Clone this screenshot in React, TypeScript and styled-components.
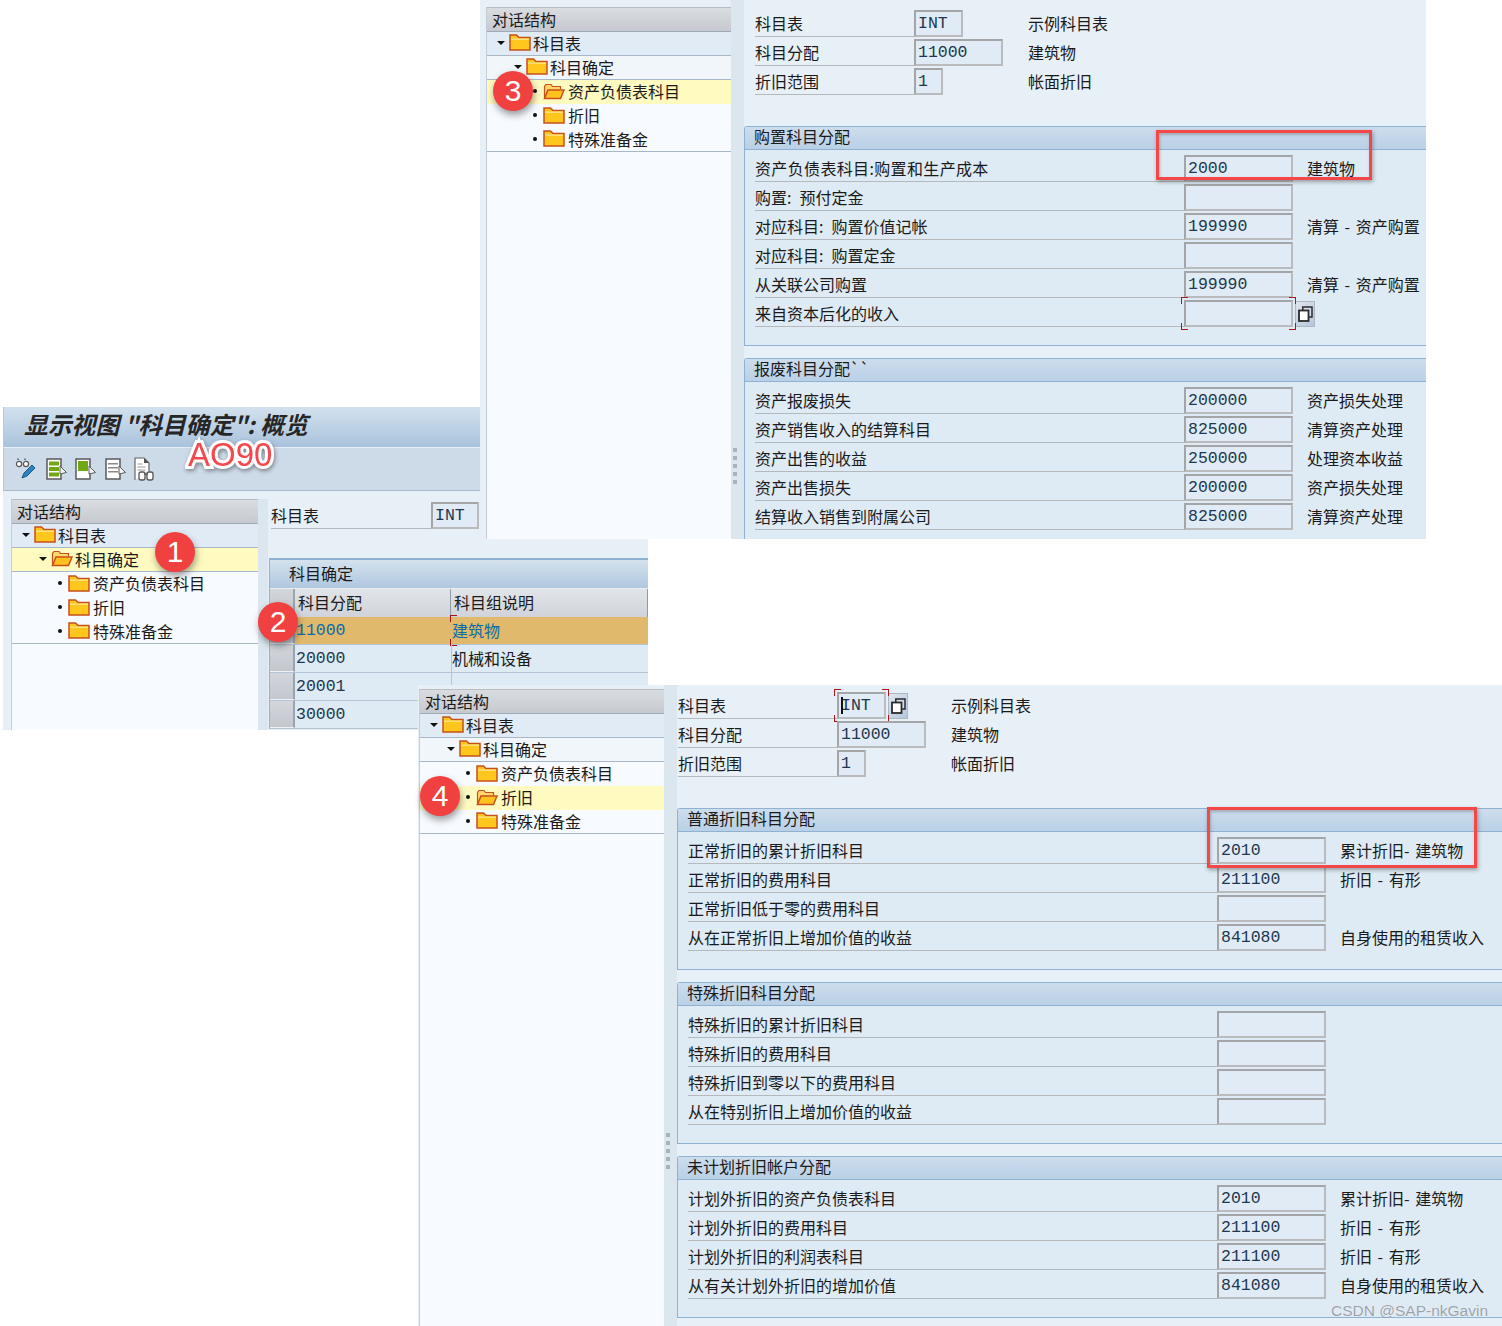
import styled, { createGlobalStyle } from "styled-components";

type TreeItem = { label: string; level: number; selected?: boolean };
type RowData = { label: string; value?: string; text?: string; focus?: boolean; f4?: boolean; caret?: boolean; spread?: boolean };

const treeItems = ["科目表", "科目确定", "资产负债表科目", "折旧", "特殊准备金"];
const levels = [0, 1, 2, 2, 2];

const buildTree = (selected: number): TreeItem[] =>
  treeItems.map((label, i) => ({ label, level: levels[i], selected: i === selected }));

const purchaseRows: RowData[] = [
  { label: "资产负债表科目:购置和生产成本", value: "2000", text: "建筑物", spread: true },
  { label: "购置: 预付定金" },
  { label: "对应科目: 购置价值记帐", value: "199990", text: "清算 - 资产购置" },
  { label: "对应科目: 购置定金" },
  { label: "从关联公司购置", value: "199990", text: "清算 - 资产购置" },
  { label: "来自资本后化的收入", focus: true, f4: true },
];

const scrapRows: RowData[] = [
  { label: "资产报废损失", value: "200000", text: "资产损失处理" },
  { label: "资产销售收入的结算科目", value: "825000", text: "清算资产处理" },
  { label: "资产出售的收益", value: "250000", text: "处理资本收益" },
  { label: "资产出售损失", value: "200000", text: "资产损失处理" },
  { label: "结算收入销售到附属公司", value: "825000", text: "清算资产处理" },
];

const normalRows: RowData[] = [
  { label: "正常折旧的累计折旧科目", value: "2010", text: "累计折旧- 建筑物" },
  { label: "正常折旧的费用科目", value: "211100", text: "折旧 - 有形" },
  { label: "正常折旧低于零的费用科目" },
  { label: "从在正常折旧上增加价值的收益", value: "841080", text: "自身使用的租赁收入" },
];

const specialRows: RowData[] = [
  { label: "特殊折旧的累计折旧科目" },
  { label: "特殊折旧的费用科目" },
  { label: "特殊折旧到零以下的费用科目" },
  { label: "从在特别折旧上增加价值的收益" },
];

const unplannedRows: RowData[] = [
  { label: "计划外折旧的资产负债表科目", value: "2010", text: "累计折旧- 建筑物" },
  { label: "计划外折旧的费用科目", value: "211100", text: "折旧 - 有形" },
  { label: "计划外折旧的利润表科目", value: "211100", text: "折旧 - 有形" },
  { label: "从有关计划外折旧的增加价值", value: "841080", text: "自身使用的租赁收入" },
];

const tableRows = [
  { code: "11000", text: "建筑物", active: true },
  { code: "20000", text: "机械和设备" },
  { code: "20001", text: "" },
  { code: "30000", text: "" },
];

const FolderIcon = ({ open }: { open?: boolean }) =>
  open ? (
    <svg width="22" height="17" viewBox="0 0 22 17">
      <path d="M1.5 15.5V3.5L3 1.5h5l1.5 2h8v3" fill="#ffd76a" stroke="#c8501c" strokeWidth="1.2" />
      <path d="M1.5 15.5L5 7h16l-3.5 8.5z" fill="#ffc21f" stroke="#c8501c" strokeWidth="1.5" />
    </svg>
  ) : (
    <svg width="22" height="17" viewBox="0 0 22 17">
      <path d="M1 16V1h6.5L10 3.5h11V16z" fill="#ffc71e" stroke="#c8501c" strokeWidth="1.5" />
      <path d="M2 4.5h18V6H2z" fill="#ffe07a" />
    </svg>
  );

const GlassesPencilIcon = () => (
  <svg width="22" height="24" viewBox="0 0 22 24">
    <circle cx="4" cy="7" r="2.6" fill="#fff" stroke="#555" strokeWidth="1.2" />
    <circle cx="11" cy="7" r="2.6" fill="#fff" stroke="#555" strokeWidth="1.2" />
    <path d="M3 3V1.5M10 3V1.5" stroke="#555" strokeWidth="1.4" />
    <path d="M7 21l2-5L17 8l3 3-8 8z" fill="#2e82bd" stroke="#1c5a8a" strokeWidth="1" />
  </svg>
);

const DocArrowIcon = ({ fill, full }: { fill: string; full?: boolean }) => (
  <svg width="21" height="22" viewBox="0 0 21 22">
    <path d="M1 1h14v20H1z" fill="#fff" stroke="#5a5a5a" strokeWidth="1.5" />
    {full ? (
      <path d="M3 3.5h10v4H3zM3 9h10v4H3zM3 14.5h10v4H3z" fill={fill} />
    ) : fill === "#6fa810" ? (
      <path d="M3 3h10v10H3z" fill={fill} />
    ) : (
      <path d="M3 5h10v1.6H3zM3 9h10v1.6H3zM3 13h10v1.6H3z" fill={fill} />
    )}
    <path d="M14 8l6.5 6.5L14 16z" fill="#f3f3f3" stroke="#5a5a5a" strokeWidth="1" />
  </svg>
);

const DocGlassesIcon = () => (
  <svg width="21" height="24" viewBox="0 0 21 24">
    <path d="M1 23V1h9l5 5v8" fill="#fff" stroke="#666" strokeWidth="1.2" />
    <path d="M10 1l5 5h-5z" fill="#555" />
    <path d="M3.5 7h5M3.5 10h8M3.5 13h8" stroke="#999" />
    <rect x="5" y="15" width="6" height="8" rx="2" fill="#fff" stroke="#555" strokeWidth="1.3" />
    <rect x="13" y="15" width="6" height="8" rx="2" fill="#fff" stroke="#555" strokeWidth="1.3" />
    <path d="M10 17h4" stroke="#555" strokeWidth="1.3" />
  </svg>
);

const CopyIcon = () => (
  <svg width="15" height="16" viewBox="0 0 15 16">
    <rect x="4.8" y="1" width="9.2" height="10" fill="#cfdcec" stroke="#2b2b2b" strokeWidth="1.5" />
    <rect x="1" y="4.5" width="9.5" height="10.5" fill="#fff" stroke="#2b2b2b" strokeWidth="1.8" />
  </svg>
);

const Tree = ({ selected, width }: { selected: number; width: number }) => (
  <TreePanel $width={width}>
    <TreeHeader>对话结构</TreeHeader>
    {buildTree(selected).map((item) => (
      <TreeRow key={item.label} $level={item.level} $selected={item.selected}>
        <Marker>{item.level < 2 ? <Arrow /> : <Bullet />}</Marker>
        <FolderIcon open={item.selected} />
        <TreeLabel $leaf={item.level === 2}>{item.label}</TreeLabel>
      </TreeRow>
    ))}
  </TreePanel>
);

const Grip = ({ width = 13 }: { width?: number }) => (
  <Splitter $width={width}>
    <GripDots>
      {[0, 1, 2, 3, 4].map((i) => (
        <GripDot key={i} />
      ))}
    </GripDots>
  </Splitter>
);

const Row = ({ row, labelWidth, fieldCol, fieldWidth = 109 }: { row: RowData; labelWidth: number; fieldCol: number; fieldWidth?: number }) => (
  <FieldRow $label={labelWidth} $field={fieldCol}>
    <FieldLabel $spread={row.spread}>{row.label}</FieldLabel>
    <FieldCell>
      <Field $width={fieldWidth} $focus={row.focus} $caret={row.caret}>
        {row.value}
      </Field>
      {row.f4 && (
        <F4Button>
          <CopyIcon />
        </F4Button>
      )}
    </FieldCell>
    <FieldText>{row.text}</FieldText>
  </FieldRow>
);

const Group = ({ title, rows, labelWidth }: { title: string; rows: RowData[]; labelWidth: number }) => (
  <Panel>
    <PanelTitle>{title}</PanelTitle>
    <PanelBody>
      {rows.map((row) => (
        <Row key={row.label} row={row} labelWidth={labelWidth} fieldCol={123} />
      ))}
    </PanelBody>
  </Panel>
);

const HeadFields = ({ inset, chartCaret }: { inset: number; chartCaret?: boolean }) => (
  <HeadBlock $inset={inset}>
    <Row row={{ label: "科目表", value: "INT", text: "示例科目表", focus: chartCaret, caret: chartCaret, f4: chartCaret }} labelWidth={159} fieldCol={114} fieldWidth={49} />
    <Row row={{ label: "科目分配", value: "11000", text: "建筑物" }} labelWidth={159} fieldCol={114} fieldWidth={89} />
    <Row row={{ label: "折旧范围", value: "1", text: "帐面折旧" }} labelWidth={159} fieldCol={114} fieldWidth={29} />
  </HeadBlock>
);

export default function App() {
  return (
    <>
      <GlobalStyle />
      <Canvas>
        <Window $x={3} $y={407} $w={645} $h={323} $z={1}>
          <TitleBar>显示视图 "科目确定": 概览</TitleBar>
          <Toolbar>
            <GlassesPencilIcon />
            <DocArrowIcon fill="#6fa810" full />
            <DocArrowIcon fill="#6fa810" />
            <DocArrowIcon fill="#8a8a8a" />
            <DocGlassesIcon />
          </Toolbar>
          <OverviewBody>
            <Tree selected={1} width={247} />
            <Grip width={10} />
            <OverviewMain>
              <ChartRow>
                <FieldRow $label={160} $field={60}>
                  <FieldLabel>科目表</FieldLabel>
                  <FieldCell>
                    <Field $width={48}>INT</Field>
                  </FieldCell>
                </FieldRow>
              </ChartRow>
              <TablePanel>
                <TableTitle>科目确定</TableTitle>
                <HeaderRow>
                  <Selector />
                  <HeaderCell>科目分配</HeaderCell>
                  <HeaderCell>科目组说明</HeaderCell>
                </HeaderRow>
                {tableRows.map((row) => (
                  <TableRow key={row.code} $active={row.active}>
                    <Selector />
                    <CodeCell $active={row.active}>{row.code}</CodeCell>
                    <TextCell $active={row.active}>{row.text}</TextCell>
                  </TableRow>
                ))}
              </TablePanel>
            </OverviewMain>
          </OverviewBody>
        </Window>

        <Window $x={480} $y={0} $w={946} $h={539} $z={2}>
          <DetailLayout $pad={6} $treeTop={7}>
            <Tree selected={2} width={245} />
            <Grip />
            <DetailMain $top={10}>
              <HeadFields inset={11} />
              <Group title="购置科目分配" rows={purchaseRows} labelWidth={429} />
              <Group title="报废科目分配``" rows={scrapRows} labelWidth={429} />
            </DetailMain>
          </DetailLayout>
        </Window>

        <Window $x={418} $y={685} $w={1084} $h={641} $z={3}>
          <DetailLayout $pad={1} $treeTop={4}>
            <Tree selected={3} width={245} />
            <Grip />
            <DetailMain $top={7}>
              <HeadFields inset={1} chartCaret />
              <Group title="普通折旧科目分配" rows={normalRows} labelWidth={529} />
              <Group title="特殊折旧科目分配" rows={specialRows} labelWidth={529} />
              <Group title="未计划折旧帐户分配" rows={unplannedRows} labelWidth={529} />
            </DetailMain>
          </DetailLayout>
        </Window>

        <TcodeLabel>AO90</TcodeLabel>
        <Badge $x={175} $y={552}>1</Badge>
        <Badge $x={278} $y={622}>2</Badge>
        <Badge $x={513} $y={91}>3</Badge>
        <Badge $x={440} $y={796}>4</Badge>
        <Highlight $x={1156} $y={130} $w={216} $h={50} />
        <Highlight $x={1207} $y={807} $w={270} $h={61} />
        <Watermark>CSDN @SAP-nkGavin</Watermark>
      </Canvas>
    </>
  );
}

const GlobalStyle = createGlobalStyle`
  html, body {
    margin: 0;
    padding: 0;
    background: #fff;
    font-family: "Noto Sans CJK SC", "Liberation Sans", sans-serif;
  }
`;

const Canvas = styled.div`
  position: relative;
  width: 1502px;
  height: 1326px;
  overflow: hidden;
  font-size: 16px;
  color: #1a1a1a;
`;

const Window = styled.div<{ $x: number; $y: number; $w: number; $h: number; $z: number }>`
  position: absolute;
  left: ${(p) => p.$x}px;
  top: ${(p) => p.$y}px;
  width: ${(p) => p.$w}px;
  height: ${(p) => p.$h}px;
  z-index: ${(p) => p.$z};
  display: flex;
  flex-direction: column;
  overflow: hidden;
  background: #e8f0f7;
`;

const TitleBar = styled.div`
  height: 40px;
  flex: none;
  box-sizing: border-box;
  padding-left: 20px;
  line-height: 34px;
  font-size: 23.8px;
  font-weight: 700;
  font-style: italic;
  white-space: pre;
  color: #262626;
  background: linear-gradient(#d3e1ee, #a9c3dc);
  border-left: 1px solid #b8c8d6;
`;

const Toolbar = styled.div`
  height: 44px;
  flex: none;
  box-sizing: border-box;
  display: flex;
  align-items: center;
  gap: 8.5px;
  padding-left: 11px;
  background: #cddbe8;
  border-top: 1px solid #e4edf5;
  border-bottom: 1px solid #a9b9c8;
  border-left: 1px solid #b8c8d6;
`;

const OverviewBody = styled.div`
  flex: 1;
  min-height: 0;
  display: flex;
  padding: 8px 0 0 8px;
`;

const DetailLayout = styled.div<{ $pad: number; $treeTop: number }>`
  flex: 1;
  min-height: 0;
  display: flex;
  padding-left: ${(p) => p.$pad}px;
  > :first-child {
    margin-top: ${(p) => p.$treeTop}px;
  }
`;

const TreePanel = styled.div<{ $width: number }>`
  width: ${(p) => p.$width}px;
  flex: none;
  box-sizing: border-box;
  background: #f7faff;
  border-left: 1px solid #c4ced8;
`;

const TreeHeader = styled.div`
  height: 25px;
  box-sizing: border-box;
  padding-left: 5px;
  line-height: 22px;
  background: linear-gradient(#d9dce0, #c6c9cf);
  border-top: 1px solid #b9bdc3;
  border-bottom: 1px solid #9eaab6;
`;

const TreeRow = styled.div<{ $level: number; $selected?: boolean }>`
  height: 24px;
  box-sizing: border-box;
  display: flex;
  align-items: center;
  padding-left: ${(p) => 10 + 17 * p.$level}px;
  padding-bottom: 2px;
  background: ${(p) => (p.$selected ? "#fffac0" : p.$level === 0 ? "#e1ebf6" : p.$level === 1 ? "#f1f6fb" : "#f7faff")};
  border-bottom: ${(p) => (p.$level < 2 ? "1px solid #a9b8c8" : "0")};

  &:last-child {
    border-bottom: 1px solid #a9b8c8;
  }
`;

const Marker = styled.span`
  width: 12px;
  flex: none;
  display: flex;
  align-items: center;
`;

const Arrow = styled.i`
  width: 0;
  height: 0;
  border-left: 4px solid transparent;
  border-right: 4px solid transparent;
  border-top: 4px solid #111;
`;

const Bullet = styled.i`
  width: 4px;
  height: 4px;
  margin-left: 2px;
  border-radius: 50%;
  background: #111;
`;

const TreeLabel = styled.span<{ $leaf?: boolean }>`
  margin-left: ${(p) => (p.$leaf ? 3 : 2)}px;
  white-space: nowrap;
`;

const Splitter = styled.div<{ $width: number }>`
  width: ${(p) => p.$width}px;
  flex: none;
  box-sizing: border-box;
  background: #dbe6ef;
  position: relative;
`;

const GripDots = styled.div`
  position: absolute;
  top: 448px;
  left: 2px;
  display: flex;
  flex-direction: column;
  gap: 4px;
`;

const GripDot = styled.i`
  width: 4px;
  height: 4px;
  background: #a9b3bd;
`;

const OverviewMain = styled.div`
  flex: 1;
  min-width: 0;
  padding-top: 3px;
`;

const ChartRow = styled.div`
  height: 56px;
  padding-left: 3px;
  box-sizing: border-box;
`;

const TablePanel = styled.div`
  margin-left: 1px;
  border-top: 2px solid #8fb2d3;
  border-left: 1px solid #8fb2d3;
`;

const TableTitle = styled.div`
  height: 28px;
  padding-left: 19px;
  line-height: 26px;
  background: linear-gradient(#d5e2ee, #afc7df);
`;

const HeaderRow = styled.div`
  display: grid;
  grid-template-columns: 25px 156px 1fr;
  height: 28px;
  background: linear-gradient(#e1e4e8, #d0d4da);
  border-top: 1px solid #e8edf2;
`;

const HeaderCell = styled.div`
  padding-left: 3px;
  line-height: 27px;
  border-right: 1px solid #8e9aa6;
  box-sizing: border-box;
`;

const Selector = styled.div`
  box-sizing: border-box;
  background: linear-gradient(#d3d6db, #c3c7ce);
  border-right: 2px solid #98a4b0;
  border-bottom: 1px solid #eef1f4;
`;

const TableRow = styled.div<{ $active?: boolean }>`
  display: grid;
  grid-template-columns: 25px 156px 1fr;
  height: 28px;
  box-sizing: border-box;
  background: ${(p) => (p.$active ? "#e0b96c" : "#deeaf4")};
  border-bottom: 1px solid #b4c4d4;
  color: ${(p) => (p.$active ? "#0b6ba8" : "inherit")};
`;

const CodeCell = styled.div<{ $active?: boolean }>`
  padding-left: 1px;
  line-height: 27px;
  font-family: "Liberation Mono", monospace;
  font-size: 16.5px;
  color: ${(p) => (p.$active ? "#0b6ba8" : "#20384f")};
`;

const TextCell = styled.div<{ $active?: boolean }>`
  position: relative;
  line-height: 27px;
  border-left: 1px solid ${(p) => (p.$active ? "transparent" : "#b4c4d4")};

  &::after {
    content: "";
    display: ${(p) => (p.$active ? "block" : "none")};
    position: absolute;
    left: -2px;
    top: -2px;
    bottom: -2px;
    width: 7px;
    background:
      linear-gradient(#a01616, #a01616) 0 0 / 7px 1px no-repeat,
      linear-gradient(#a01616, #a01616) 0 100% / 7px 1px no-repeat,
      linear-gradient(#a01616, #a01616) 0 0 / 1px 7px no-repeat,
      linear-gradient(#a01616, #a01616) 0 100% / 1px 7px no-repeat;
  }
`;

const HeadBlock = styled.div<{ $inset: number }>`
  padding-left: ${(p) => p.$inset}px;
  display: flex;
  flex-direction: column;
  gap: 2px;
  margin-bottom: 31px;
`;

const FieldRow = styled.div<{ $label: number; $field: number }>`
  display: grid;
  grid-template-columns: ${(p) => p.$label}px ${(p) => p.$field}px 1fr;
  height: 27px;
`;

const FieldLabel = styled.div<{ $spread?: boolean }>`
  line-height: 26px;
  white-space: nowrap;
  word-spacing: 4.5px;
  letter-spacing: ${(p) => (p.$spread ? "0.35px" : "0")};
  box-sizing: border-box;
  border-bottom: 1px solid #b6b9bc;
`;

const FieldCell = styled.div`
  display: flex;
  align-items: stretch;
  gap: 2px;
`;

const cornerGradient = "linear-gradient(#b01414, #b01414)";

const Field = styled.div<{ $width: number; $focus?: boolean; $caret?: boolean }>`
  position: relative;
  flex: none;
  width: ${(p) => p.$width}px;
  box-sizing: border-box;
  padding-left: 2px;
  line-height: 23px;
  font-family: "Liberation Mono", monospace;
  font-size: 16.5px;
  color: #20384f;
  background: #e0ebf5;
  border: 2px solid;
  border-color: #a3a5a7 #b9bbbd #b9bbbd #a3a5a7;

  &::after {
    content: "";
    display: ${(p) => (p.$focus ? "block" : "none")};
    position: absolute;
    inset: -5px;
    background:
      ${cornerGradient} 0 0 / 7px 1px no-repeat,
      ${cornerGradient} 0 0 / 1px 7px no-repeat,
      ${cornerGradient} 100% 0 / 7px 1px no-repeat,
      ${cornerGradient} 100% 0 / 1px 7px no-repeat,
      ${cornerGradient} 0 100% / 7px 1px no-repeat,
      ${cornerGradient} 0 100% / 1px 7px no-repeat,
      ${cornerGradient} 100% 100% / 7px 1px no-repeat,
      ${cornerGradient} 100% 100% / 1px 7px no-repeat;
  }

  &::before {
    content: "";
    display: ${(p) => (p.$caret ? "block" : "none")};
    position: absolute;
    left: 2px;
    top: 3px;
    width: 2px;
    height: 17px;
    background: #111;
  }
`;

const F4Button = styled.div`
  width: 20px;
  flex: none;
  display: flex;
  align-items: center;
  justify-content: center;
  box-sizing: border-box;
  margin-top: 1px;
  background: linear-gradient(135deg, #dfe5ec, #b4c7de);
  border: 1px solid #aeb6bf;
`;

const FieldText = styled.div`
  line-height: 27px;
  white-space: nowrap;
  word-spacing: 2px;
`;

const Panel = styled.section`
  margin-bottom: 12px;
  border: 1px solid #8fb2d3;
  border-right: 0;
  border-top-left-radius: 3px;
  background: #deeaf4;
`;

const PanelTitle = styled.div`
  height: 22px;
  padding-left: 9px;
  line-height: 19px;
  background: linear-gradient(#cddded, #b9d0e6);
  border-bottom: 1px solid #8fb2d3;
  box-sizing: content-box;
`;

const PanelBody = styled.div`
  display: flex;
  flex-direction: column;
  gap: 2px;
  padding: 5px 0 18px 10px;
`;

const DetailMain = styled.div<{ $top: number }>`
  flex: 1;
  min-width: 0;
  padding-top: ${(p) => p.$top}px;
`;

const TcodeLabel = styled.div`
  position: absolute;
  z-index: 4;
  left: 188px;
  top: 440px;
  font-family: "Liberation Sans", sans-serif;
  font-size: 33px;
  line-height: 30px;
  color: #f8474c;
  -webkit-text-stroke: 6px #fff;
  paint-order: stroke fill;
  filter: drop-shadow(1px 2px 2px rgba(60, 60, 60, 0.55));
`;

const Badge = styled.div<{ $x: number; $y: number }>`
  position: absolute;
  z-index: 5;
  left: ${(p) => p.$x - 20}px;
  top: ${(p) => p.$y - 20}px;
  width: 40px;
  height: 40px;
  border-radius: 50%;
  display: flex;
  align-items: center;
  justify-content: center;
  background: #f0403f;
  color: #fff;
  font-family: "Liberation Sans", sans-serif;
  font-size: 30px;
  box-shadow: 1px 4px 7px rgba(40, 40, 40, 0.45);
`;

const Highlight = styled.div<{ $x: number; $y: number; $w: number; $h: number }>`
  position: absolute;
  z-index: 5;
  left: ${(p) => p.$x}px;
  top: ${(p) => p.$y}px;
  width: ${(p) => p.$w}px;
  height: ${(p) => p.$h}px;
  box-sizing: border-box;
  border: 3px solid #f54648;
  box-shadow:
    1px 2px 4px rgba(60, 60, 60, 0.45),
    inset 1px 2px 3px rgba(60, 60, 60, 0.3);
`;

const Watermark = styled.div`
  position: absolute;
  z-index: 6;
  left: 1331px;
  top: 1302px;
  font-family: "Liberation Sans", sans-serif;
  font-size: 15.5px;
  line-height: 18px;
  white-space: nowrap;
  color: rgba(130, 135, 140, 0.75);
  text-shadow: 0 0 1px rgba(255, 255, 255, 0.6);
`;
